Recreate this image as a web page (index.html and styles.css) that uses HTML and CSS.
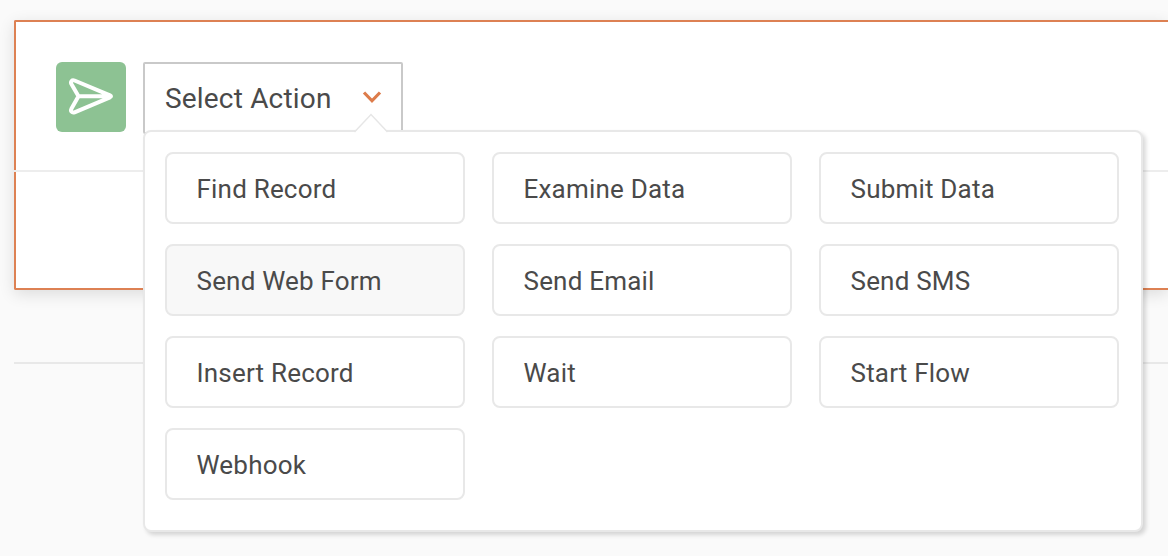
FILE: index.html
```html
<!DOCTYPE html>
<html lang="en">
<head>
<meta charset="utf-8">
<title>Select Action</title>
<link rel="stylesheet" href="styles.css">
</head>
<body>
<main class="card">
  <header class="card-head">
    <div class="badge">
      <svg width="70" height="70" viewBox="0 0 70 70" fill="none" stroke="#fff" stroke-width="4" stroke-linejoin="round" stroke-linecap="round"><path d="M18.500 18.500L54 33.300Q56 34.300 54 35.300L18.500 50.300C16 51.200 14.200 49.200 15.400 46.800L22.500 34.300L15.400 22C14.200 19.600 16 17.500 18.500 18.500ZM22.500 34.300H54"/></svg>
    </div>
    <div class="select">
      <span class="select-label">Select Action</span>
      <svg class="chevron" width="20" height="14" viewBox="0 0 20 14" fill="none" stroke="#dd7c4b" stroke-width="3.200"><path d="M2 1.500L10 9.800L18 1.500"/></svg>
      <div class="menu">
        <svg class="pointer" width="36" height="20" viewBox="0 0 36 20"><path d="M2 19L18 1.500L34 19V20H2Z" fill="#fff"/><path d="M1.500 19L18 1.500L34.500 19" fill="none" stroke="#e6e6e6" stroke-width="1.400"/></svg>
        <button class="option">Find Record</button>
        <button class="option">Examine Data</button>
        <button class="option">Submit Data</button>
        <button class="option active">Send Web Form</button>
        <button class="option">Send Email</button>
        <button class="option">Send SMS</button>
        <button class="option">Insert Record</button>
        <button class="option">Wait</button>
        <button class="option">Start Flow</button>
        <button class="option">Webhook</button>
      </div>
    </div>
  </header>
</main>
<hr class="divider">
</body>
</html>
```

FILE: styles.css
```css
* { box-sizing: border-box; }
body {
  margin: 0;
  padding: 20px 0 0 14px;
  height: 556px;
  overflow: hidden;
  background: #fafafa;
  color: #4a4a4a;
  font: 27px Roboto, sans-serif;
}
.card {
  height: 270px;
  background: #fff;
  border: 2px solid #dd8153;
  border-right: 0;
  border-radius: 2px 0 0 2px;
  box-shadow: 0 4px 16px rgba(0, 0, 0, .12);
}
.card-head {
  display: flex;
  height: 150px;
  margin-left: -2px;
  padding: 40px 0 0 42px;
  border-bottom: 2px solid #ededed;
}
.badge {
  width: 70px;
  height: 70px;
  margin-right: 17px;
  border-radius: 6px;
  background: #8dc293;
}
.badge svg { display: block; }
.select {
  position: relative;
  display: flex;
  align-items: center;
  justify-content: space-between;
  width: 260px;
  height: 72px;
  padding: 0 19px 0 20px;
  border: 2px solid #c9c9c9;
  border-radius: 2px;
}
.select-label { font-size: 28px; letter-spacing: .18px; }
.menu {
  position: absolute;
  top: 66px;
  left: -2px;
  display: grid;
  grid-template-columns: repeat(3, 300px);
  grid-auto-rows: 72px;
  align-content: start;
  gap: 20px 27px;
  width: 1000px;
  height: 402px;
  padding: 20px;
  background: #fff;
  border: 2px solid #e8e8e8;
  border-radius: 8px;
  box-shadow: 3px 3px 4px rgba(0, 0, 0, .15);
}
.pointer { position: absolute; top: -19px; left: 208px; }
.option {
  padding: 2px 29.5px 0;
  border: 2px solid #e8e8e8;
  border-radius: 8px;
  background: #fff;
  color: inherit;
  font: inherit;
  font-size: 26px;
  letter-spacing: .2px;
  text-align: left;
}
.option.active { background: #f8f8f8; }
.divider {
  width: 100%;
  height: 2px;
  margin: 72px 0 0;
  border: 0;
  background: #e8e8e8;
}
```
